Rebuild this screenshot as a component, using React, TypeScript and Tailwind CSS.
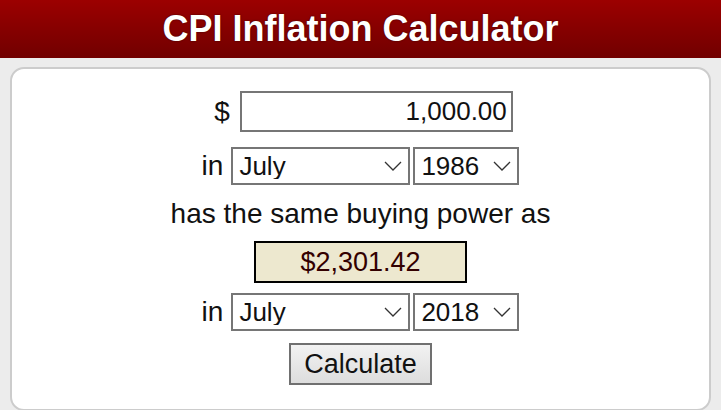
import React from 'react';

const months = [
  'January', 'February', 'March', 'April', 'May', 'June',
  'July', 'August', 'September', 'October', 'November', 'December',
];

const Chevron = () => (
  <svg
    width="18"
    height="10"
    viewBox="0 0 18 10"
    className="pointer-events-none absolute right-[8px] top-1/2 -translate-y-1/2"
  >
    <path d="M1 1 L9 9 L17 1" fill="none" stroke="#333" strokeWidth="1.3" />
  </svg>
);

const DateRow = ({ year }: { year: string }) => (
  <div className="flex items-center">
    <span className="mr-[8px] text-[28px] leading-none">in</span>
    <div className="relative">
      <select
        defaultValue="July"
        className="h-[38px] w-[179px] appearance-none border-2 border-[#767676] bg-white pl-[6px] text-[26px] leading-none text-[#111] outline-none"
      >
        {months.map((m) => (
          <option key={m}>{m}</option>
        ))}
      </select>
      <Chevron />
    </div>
    <div className="relative ml-[3px]">
      <select
        defaultValue={year}
        className="h-[38px] w-[106px] appearance-none border-2 border-[#767676] bg-white pl-[6px] text-[26px] leading-none text-[#111] outline-none"
      >
        <option>1986</option>
        <option>2018</option>
      </select>
      <Chevron />
    </div>
  </div>
);

export default function App() {
  return (
    <div className="h-[410px] w-[721px] overflow-hidden bg-[#ececec] font-['Liberation_Sans',Arial,sans-serif] text-[#111]">
      {/* Header */}
      <header className="flex h-[58px] items-center justify-center bg-gradient-to-b from-[#9c0000] to-[#710000]">
        <h1 className="text-[36px] font-bold leading-none text-white [text-shadow:0_0_2px_rgba(0,0,0,0.6)]">
          CPI Inflation Calculator
        </h1>
      </header>

      {/* Card */}
      <div className="px-[10px] pt-[9px]">
        <div className="flex h-[344px] flex-col items-center rounded-[14px] border-2 border-[#cccccc] bg-white pt-[22px]">
          <div className="ml-[6px] flex items-center">
            <span className="mr-[10px] text-[28px] leading-none">$</span>
            <input
              defaultValue="1,000.00"
              className="h-[41px] w-[273px] border-2 border-[#767676] pr-[4px] text-right text-[26px] text-[#111] outline-none"
            />
          </div>

          <div className="mt-[15px]">
            <DateRow year="1986" />
          </div>

          <p className="mt-[13px] text-[28px] leading-[32px]">has the same buying power as</p>

          <div className="mt-[11px] flex h-[42px] w-[213px] items-center justify-center border-2 border-black bg-[#ede8cf] text-[27px] text-[#330000]">
            $2,301.42
          </div>

          <div className="mt-[10px]">
            <DateRow year="2018" />
          </div>

          <button className="mt-[12px] h-[42px] w-[143px] border-2 border-[#707070] bg-gradient-to-b from-[#f2f2f2] to-[#dddddd] text-[27px] leading-none text-[#111]">
            Calculate
          </button>
        </div>
      </div>
    </div>
  );
}
